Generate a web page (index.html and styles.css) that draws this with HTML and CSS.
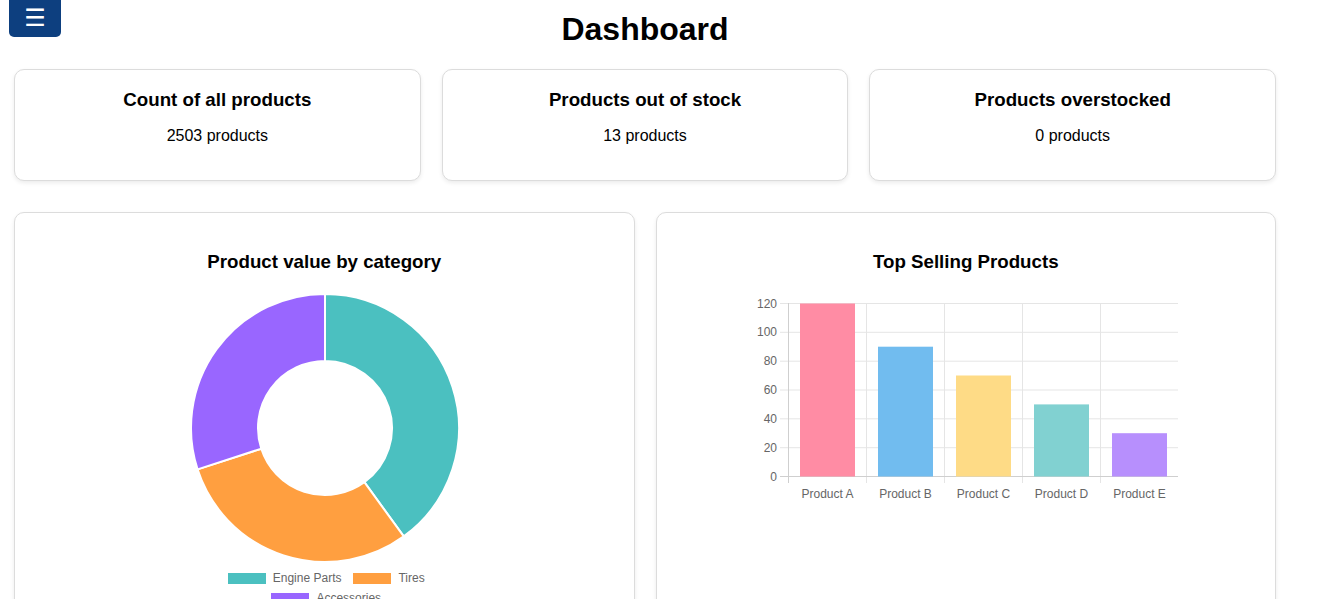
FILE: index.html
```html
<!DOCTYPE html>
<html lang="en">
<head>
<meta charset="utf-8">
<title>Dashboard</title>
<link rel="stylesheet" href="styles.css">
</head>
<body>
<button class="menu-btn" aria-label="Menu">☰</button>
<main class="main">
  <h1 class="page-title">Dashboard</h1>
  <section class="stats">
    <div class="card stat">
      <h3 class="card-title">Count of all products</h3>
      <p class="stat-value">2503 products</p>
    </div>
    <div class="card stat">
      <h3 class="card-title">Products out of stock</h3>
      <p class="stat-value">13 products</p>
    </div>
    <div class="card stat">
      <h3 class="card-title">Products overstocked</h3>
      <p class="stat-value">0 products</p>
    </div>
  </section>
  <section class="charts">
    <div class="card chart-card">
      <h3 class="card-title">Product value by category</h3>
      <svg class="donut" width="270" height="270" viewBox="0 0 270 270">
        <g transform="translate(135,135)" stroke="#fff" stroke-width="2" stroke-linejoin="round">
          <path fill="#4bc0c0" d="M0,-134 A134,134 0 0 1 78.76,108.41 L39.38,54.2 A67,67 0 0 0 0,-67 Z"/>
          <path fill="#ff9f40" d="M78.76,108.41 A134,134 0 0 1 -127.44,41.41 L-63.72,20.7 A67,67 0 0 0 39.38,54.2 Z"/>
          <path fill="#9966ff" d="M-127.44,41.41 A134,134 0 0 1 0,-134 L0,-67 A67,67 0 0 0 -63.72,20.7 Z"/>
        </g>
      </svg>
      <ul class="legend">
        <li class="legend-item"><span class="swatch sw-teal"></span>Engine Parts</li>
        <li class="legend-item"><span class="swatch sw-orange"></span>Tires</li>
        <li class="legend-item"><span class="swatch sw-purple"></span>Accessories</li>
      </ul>
    </div>
    <div class="card chart-card">
      <h3 class="card-title">Top Selling Products</h3>
      <svg class="bars" width="620" height="220" viewBox="0 0 620 220">
        <g transform="translate(1,0)">
          <g stroke="#e5e5e5" stroke-width="1">
            <line x1="123" y1="10.5" x2="521" y2="10.5"/>
            <line x1="123" y1="39.3" x2="521" y2="39.3"/>
            <line x1="123" y1="68.2" x2="521" y2="68.2"/>
            <line x1="123" y1="97" x2="521" y2="97"/>
            <line x1="123" y1="125.8" x2="521" y2="125.8"/>
            <line x1="123" y1="154.7" x2="521" y2="154.7"/>
            <line x1="209.5" y1="10" x2="209.5" y2="190"/>
            <line x1="287.5" y1="10" x2="287.5" y2="190"/>
            <line x1="365.5" y1="10" x2="365.5" y2="190"/>
            <line x1="443.5" y1="10" x2="443.5" y2="190"/>
          </g>
          <g stroke="#cfcfcf" stroke-width="1">
            <line x1="131.5" y1="10" x2="131.5" y2="190"/>
            <line x1="123" y1="183.5" x2="521" y2="183.5"/>
          </g>
          <g>
            <rect x="143" y="10.5" width="55" height="173" fill="#ff8ca4"/>
            <rect x="221" y="53.7" width="55" height="129.8" fill="#71bcef"/>
            <rect x="299" y="82.5" width="55" height="101" fill="#fedb86"/>
            <rect x="377" y="111.4" width="55" height="72.1" fill="#81d1d1"/>
            <rect x="455" y="140.2" width="55" height="43.3" fill="#b78ffd"/>
          </g>
          <g fill="#666" font-family="Liberation Sans, Arial, sans-serif" font-size="12" text-anchor="end">
            <text x="120" y="14.5">120</text>
            <text x="120" y="43.3">100</text>
            <text x="120" y="72.2">80</text>
            <text x="120" y="101">60</text>
            <text x="120" y="129.8">40</text>
            <text x="120" y="158.7">20</text>
            <text x="120" y="187.5">0</text>
          </g>
          <g fill="#666" font-family="Liberation Sans, Arial, sans-serif" font-size="12" text-anchor="middle">
            <text x="170.5" y="205">Product A</text>
            <text x="248.5" y="205">Product B</text>
            <text x="326.5" y="205">Product C</text>
            <text x="404.5" y="205">Product D</text>
            <text x="482.5" y="205">Product E</text>
          </g>
        </g>
      </svg>
    </div>
  </section>
</main>
</body>
</html>
```
FILE: styles.css
```css
* {
  box-sizing: border-box;
}

body {
  margin: 0;
  background: #fff;
  font-family: "Liberation Sans", Arial, sans-serif;
  color: #000;
}

.menu-btn {
  position: absolute;
  top: -6px;
  left: 9px;
  width: 52px;
  height: 43px;
  padding: 4px 0 0;
  border: none;
  border-radius: 5px;
  background: #0d3f7f;
  color: #fff;
  font-family: "DejaVu Sans", sans-serif;
  font-size: 24px;
  line-height: 30px;
  text-align: center;
}

.main {
  width: 1274px;
  margin: 0 8px;
}

.page-title {
  margin: 11px 0 0;
  font-size: 32px;
  line-height: 37px;
  font-weight: bold;
  text-align: center;
}

.stats {
  display: flex;
  gap: 21px;
  padding: 0 6px;
  margin-top: 21px;
}

.card {
  background: #fff;
  border: 1px solid #dcdcdc;
  border-radius: 10px;
  box-shadow: 0 2px 4px rgba(0, 0, 0, 0.08);
}

.stat {
  flex: 1;
  height: 112px;
  padding: 19px 20px 0;
  text-align: center;
}

.card-title {
  margin: 0;
  font-size: 18.72px;
  line-height: 22px;
  font-weight: bold;
}

.stat-value {
  margin: 16px 0 0;
  font-size: 16px;
  line-height: 18px;
}

.charts {
  display: flex;
  gap: 21px;
  padding: 0 6px;
  margin-top: 31px;
}

.chart-card {
  flex: 1;
  height: 420px;
  padding-top: 38px;
  display: flex;
  flex-direction: column;
  align-items: center;
  overflow: hidden;
}

.donut {
  display: block;
  margin: 20px 0 0 2px;
}

.bars {
  display: block;
  margin-top: 20px;
  flex: none;
}

.legend {
  list-style: none;
  margin: 9px 0 0 4px;
  padding: 0;
  width: 260px;
  display: flex;
  flex-wrap: wrap;
  justify-content: center;
  column-gap: 12px;
  row-gap: 8px;
}

.legend-item {
  display: flex;
  align-items: center;
  gap: 7px;
  font-size: 12px;
  line-height: 12px;
  color: #666;
}

.swatch {
  display: inline-block;
  width: 38px;
  height: 11px;
}

.sw-teal {
  background: #4bc0c0;
}

.sw-orange {
  background: #ff9f40;
}

.sw-purple {
  background: #9966ff;
}
```
